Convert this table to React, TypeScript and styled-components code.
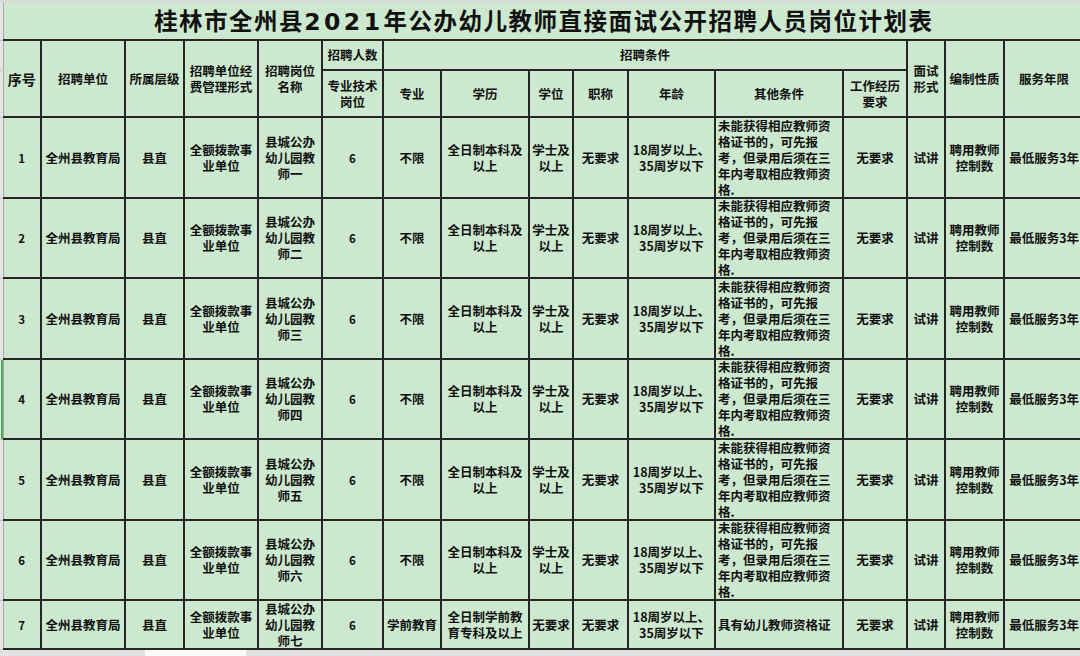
import React from "react";
import styled, { createGlobalStyle } from "styled-components";

const GlobalStyle = createGlobalStyle`
  html, body {
    margin: 0;
    padding: 0;
  }
  body {
    width: 1080px;
    height: 656px;
    overflow: hidden;
    background: #e6e6e6;
    font-family: "Noto Sans CJK SC", "Noto Sans", sans-serif;
  }
`;

// column widths, first one is the sheet gutter
const COLS = [3, 38, 84, 59, 74, 64, 61, 58, 88, 44, 55, 87, 128, 64, 38, 59, 80];

const OTHER =
  "未能获得相应教师资\n格证书的，可先报\n考，但录用后须在三\n年内考取相应教师资\n格.";

type JobRow = {
  no: string;
  post: string;
  major: string;
  edu: string;
  degree: string;
  other: string;
  height: number;
};

const NUMS = ["一", "二", "三", "四", "五", "六", "七"];
const HEIGHTS = [81, 80, 81, 80, 81, 80];

const rows: JobRow[] = [
  ...HEIGHTS.map((h, i) => ({
    no: String(i + 1),
    post: `县城公办\n幼儿园教\n师${NUMS[i]}`,
    major: "不限",
    edu: "全日制本科及\n以上",
    degree: "学士及\n以上",
    other: OTHER,
    height: h,
  })),
  {
    no: "7",
    post: "县城公办\n幼儿园教\n师七",
    major: "学前教育",
    edu: "全日制学前教\n育专科及以上",
    degree: "无要求",
    other: "具有幼儿教师资格证",
    height: 49,
  },
];

function App() {
  return (
    <>
      <GlobalStyle />
      <Sheet>
        <Table>
          <colgroup>
            {COLS.map((w, i) => (
              <col key={i} style={{ width: w }} />
            ))}
          </colgroup>
          <tbody>
            <tr>
              <Gutter />
              <TitleCell colSpan={16}>
                <Inner $h={37}>
                  <Title>
                    桂林市全州县<Digits>2021</Digits>年公办幼儿教师直接面试公开招聘人员岗位计划表
                  </Title>
                </Inner>
              </TitleCell>
            </tr>
            <tr>
              <Gutter />
              <Cell rowSpan={2} $edge>
                <Inner $h={75} $size={14}>序号</Inner>
              </Cell>
              <Cell rowSpan={2}>
                <Inner $h={75}>招聘单位</Inner>
              </Cell>
              <Cell rowSpan={2}>
                <Inner $h={75}>所属层级</Inner>
              </Cell>
              <Cell rowSpan={2}>
                <Inner $h={75}>{"招聘单位经\n费管理形式"}</Inner>
              </Cell>
              <Cell rowSpan={2}>
                <Inner $h={75}>{"招聘岗位\n名称"}</Inner>
              </Cell>
              <Cell>
                <Inner $h={28}>招聘人数</Inner>
              </Cell>
              <Cell colSpan={7}>
                <Inner $h={28}>招聘条件</Inner>
              </Cell>
              <Cell rowSpan={2}>
                <Inner $h={75}>{"面试\n形式"}</Inner>
              </Cell>
              <Cell rowSpan={2}>
                <Inner $h={75}>编制性质</Inner>
              </Cell>
              <Cell rowSpan={2}>
                <Inner $h={75}>服务年限</Inner>
              </Cell>
            </tr>
            <tr>
              <Gutter />
              <Cell>
                <Inner $h={45}>{"专业技术\n岗位"}</Inner>
              </Cell>
              <Cell>
                <Inner $h={45}>专业</Inner>
              </Cell>
              <Cell>
                <Inner $h={45}>学历</Inner>
              </Cell>
              <Cell>
                <Inner $h={45}>学位</Inner>
              </Cell>
              <Cell>
                <Inner $h={45}>职称</Inner>
              </Cell>
              <Cell>
                <Inner $h={45}>年龄</Inner>
              </Cell>
              <Cell>
                <Inner $h={45}>其他条件</Inner>
              </Cell>
              <Cell>
                <Inner $h={45}>{"工作经历\n要求"}</Inner>
              </Cell>
            </tr>

            {rows.map((r, i) => {
              const h = r.height - 2;
              return (
                <tr key={r.no}>
                  <Gutter $active={i === 3} />
                  <Cell $edge>
                    <Inner $h={h} $size={11.5}>{r.no}</Inner>
                  </Cell>
                  <Cell>
                    <Inner $h={h}>全州县教育局</Inner>
                  </Cell>
                  <Cell>
                    <Inner $h={h}>县直</Inner>
                  </Cell>
                  <Cell>
                    <Inner $h={h}>{"全额拨款事\n业单位"}</Inner>
                  </Cell>
                  <Cell>
                    <Inner $h={h}>{r.post}</Inner>
                  </Cell>
                  <Cell>
                    <Inner $h={h} $size={11.5}>6</Inner>
                  </Cell>
                  <Cell>
                    <Inner $h={h}>{r.major}</Inner>
                  </Cell>
                  <Cell>
                    <Inner $h={h}>{r.edu}</Inner>
                  </Cell>
                  <Cell>
                    <Inner $h={h}>{r.degree}</Inner>
                  </Cell>
                  <Cell>
                    <Inner $h={h}>无要求</Inner>
                  </Cell>
                  <Cell>
                    <Inner $h={h}>{"18周岁以上、\n35周岁以下"}</Inner>
                  </Cell>
                  <Cell>
                    <Inner $h={h} $left>
                      {r.other}
                    </Inner>
                  </Cell>
                  <Cell>
                    <Inner $h={h}>无要求</Inner>
                  </Cell>
                  <Cell>
                    <Inner $h={h}>试讲</Inner>
                  </Cell>
                  <Cell>
                    <Inner $h={h}>{"聘用教师\n控制数"}</Inner>
                  </Cell>
                  <Cell>
                    <Inner $h={h}>最低服务3年</Inner>
                  </Cell>
                </tr>
              );
            })}
          </tbody>
        </Table>
        <ScrollStrip>
          <Thumb />
        </ScrollStrip>
      </Sheet>
    </>
  );
}

export default App;

// Style
const Sheet = styled.div`
  width: 1080px;
  height: 656px;
  overflow: hidden;
  padding-top: 2px;
  box-sizing: border-box;
  background: #dadada;
  display: flex;
  flex-direction: column;
`;

const Table = styled.table`
  border-collapse: collapse;
  table-layout: fixed;
  width: 1084px;
  flex: none;
  background: #cce8ce;
  color: #111;
`;

const Gutter = styled.td<{ $active?: boolean }>`
  padding: 0;
  background: #e4e4e4;
  border: none;
  border-right: 1px solid #a9a9a9;
  border-bottom: 1px solid #c6c6c6;
  box-shadow: ${(p) => (p.$active ? "inset -2px 0 0 #4caf50" : "none")};
`;

const Cell = styled.td<{ $edge?: boolean }>`
  padding: 0;
  border: 2px solid #262626;
  vertical-align: middle;
  ${(p) => (p.$edge ? "border-left: none;" : "")}
`;

const TitleCell = styled(Cell)`
  border-top: none;
  border-left: none;
  border-right: none;
`;

const Inner = styled.div<{ $h: number; $size?: number; $left?: boolean }>`
  height: ${(p) => p.$h}px;
  display: flex;
  align-items: center;
  justify-content: ${(p) => (p.$left ? "flex-start" : "center")};
  text-align: ${(p) => (p.$left ? "left" : "center")};
  padding: ${(p) => (p.$left ? "0 1px 0 2px" : "0")};
  overflow: hidden;
  white-space: pre-line;
  font-size: ${(p) => p.$size ?? 12.5}px;
  line-height: 16px;
  font-weight: 700;
`;

const Title = styled.div`
  font-size: 23.5px;
  line-height: 30px;
  font-weight: 700;
  letter-spacing: 1.5px;
  color: #111;
  white-space: nowrap;
`;

const Digits = styled.span`
  font-family: "DejaVu Sans", "Noto Sans", sans-serif;
  letter-spacing: 3.5px;
`;

const ScrollStrip = styled.div`
  flex: 1;
  display: flex;
  align-items: stretch;
  background: #e2e2e2;
`;

const Thumb = styled.div`
  margin-left: 145px;
  width: 101px;
  background: #fafafa;
`;
